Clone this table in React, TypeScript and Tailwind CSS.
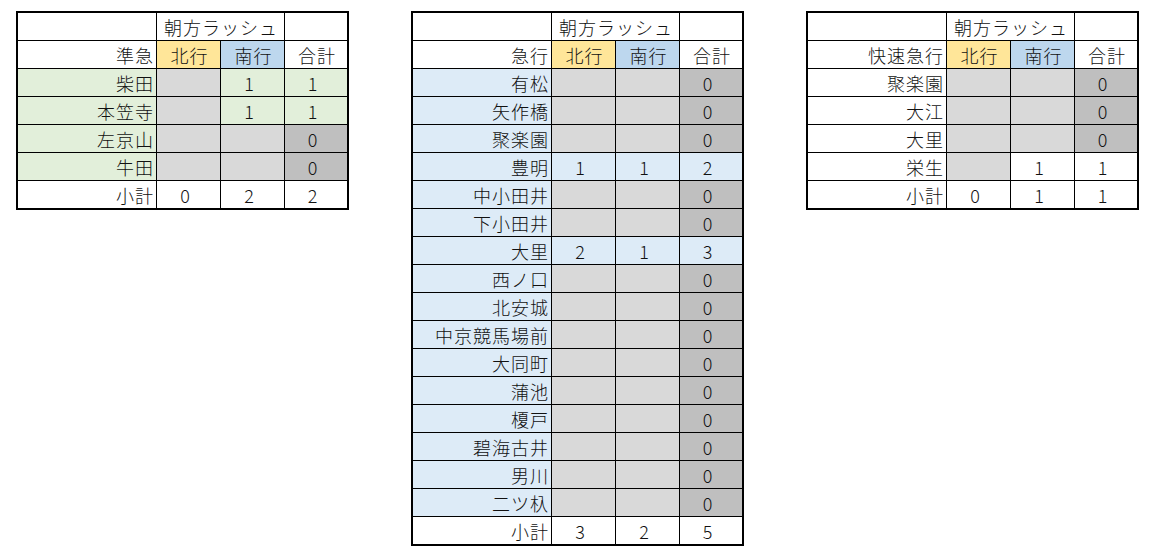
import React from "react";

type Row = { name: string; vals: (number | null)[] };
type TableProps = {
  title: string;
  rowBg: string;
  rows: Row[];
  subtotal: number[];
};

function Table({ title, rowBg, rows, subtotal }: TableProps) {
  return (
    <div className="grid grid-cols-[138px_63px_63px_62px] auto-rows-[27px] gap-px bg-black border-2 border-black">
      <div className="bg-white" />
      <div className="col-span-2 bg-white flex items-center justify-center pl-[1px]">朝方ラッシュ</div>
      <div className="bg-white" />

      <div className="bg-white flex items-center justify-end pr-[2px]">{title}</div>
      <div className="bg-[#FFE699] flex items-center justify-center pl-[2px]">北行</div>
      <div className="bg-[#BDD7EE] flex items-center justify-center pl-[2px]">南行</div>
      <div className="bg-white flex items-center justify-center pl-[2px]">合計</div>

      {rows.map((r) => (
        <React.Fragment key={r.name}>
          <div className={`${rowBg} flex items-center justify-end pr-[2px]`}>{r.name}</div>
          {r.vals.map((v, i) => {
            let bg = rowBg;
            if (v === null) bg = "bg-[#D9D9D9]";
            else if (i === 2 && v === 0) bg = "bg-[#BFBFBF]";
            return (
              <div key={i} className={`${bg} flex items-center justify-center pr-[6px]`}>
                {v === null ? "" : v}
              </div>
            );
          })}
        </React.Fragment>
      ))}

      <div className="bg-white flex items-center justify-end pr-[2px]">小計</div>
      {subtotal.map((v, i) => (
        <div key={i} className="bg-white flex items-center justify-center pr-[6px]">
          {v}
        </div>
      ))}
    </div>
  );
}

const z = (name: string): Row => ({ name, vals: [null, null, 0] });

export default function App() {
  return (
    <div className="bg-white min-h-[555px] pl-[16px] pt-[11px] flex items-start gap-[62px] font-['Noto_Sans_CJK_JP','Noto_Sans',sans-serif] font-light text-[18px] tracking-[1px] leading-none text-[#111]">
      <Table
        title="準急"
        rowBg="bg-[#E2EFDA]"
        rows={[
          { name: "柴田", vals: [null, 1, 1] },
          { name: "本笠寺", vals: [null, 1, 1] },
          z("左京山"),
          z("牛田"),
        ]}
        subtotal={[0, 2, 2]}
      />
      <Table
        title="急行"
        rowBg="bg-[#DDEBF7]"
        rows={[
          z("有松"),
          z("矢作橋"),
          z("聚楽園"),
          { name: "豊明", vals: [1, 1, 2] },
          z("中小田井"),
          z("下小田井"),
          { name: "大里", vals: [2, 1, 3] },
          z("西ノ口"),
          z("北安城"),
          z("中京競馬場前"),
          z("大同町"),
          z("蒲池"),
          z("榎戸"),
          z("碧海古井"),
          z("男川"),
          z("二ツ杁"),
        ]}
        subtotal={[3, 2, 5]}
      />
      <Table
        title="快速急行"
        rowBg="bg-white"
        rows={[
          z("聚楽園"),
          z("大江"),
          z("大里"),
          { name: "栄生", vals: [null, 1, 1] },
        ]}
        subtotal={[0, 1, 1]}
      />
    </div>
  );
}
